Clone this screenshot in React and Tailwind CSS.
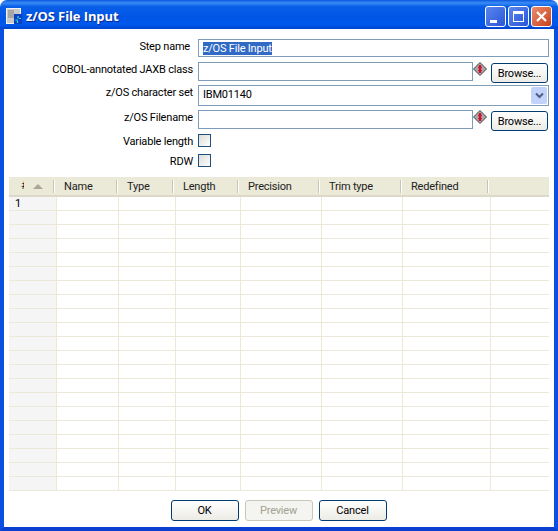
import React from 'react';

const HEADER_COLS = [
    { label: '', width: 'w-[46px]' },
    { label: 'Name', width: 'w-[63px]' },
    { label: 'Type', width: 'w-[56px]' },
    { label: 'Length', width: 'w-[65px]' },
    { label: 'Precision', width: 'w-[81px]' },
    { label: 'Trim type', width: 'w-[82px]' },
    { label: 'Redefined', width: 'w-[87px]' },
];

const ROW_COLS = ['w-[62px]', 'w-[57px]', 'w-[65px]', 'w-[81px]', 'w-[81px]', 'w-[88px]'];
const ROWS = Array.from({ length: 21 }, (_, i) => i);

function AppIcon() {
    return (
        <svg width="17" height="17" viewBox="0 0 17 17" className="shrink-0">
            <rect x="0.5" y="0.5" width="14" height="15" fill="#c9c9c9" stroke="#f2f2f2" />
            <rect x="2" y="2" width="6" height="8" fill="#a6a6a6" />
            <rect x="8" y="6" width="8" height="10" fill="#0b3fc4" />
            <path d="M9.5 12h2M13 10.5h2M12 8v2.5M11.5 12.5v2.5" stroke="#35e0c8" strokeWidth="1.2" />
        </svg>
    );
}

function RequiredIcon() {
    return (
        <svg width="14" height="14" viewBox="0 0 14 14" className="shrink-0">
            <path d="M7 .5 13.5 7 7 13.5.5 7z" fill="#a8a8a8" stroke="#444" strokeWidth="1" />
            <path d="M7 3v8" stroke="#d0102c" strokeWidth="2.4" />
            <path d="M5 5.5h4M5 8.5h4" stroke="#d0102c" strokeWidth="1.2" />
        </svg>
    );
}

function CaptionButton({ className, children }) {
    return (
        <div className={`w-[21px] h-[21px] rounded-[3px] border border-white flex items-center justify-center ${className}`}>
            {children}
        </div>
    );
}

function Field({ label, height, labelClass = '', children }) {
    return (
        <div className={`flex items-start ${height}`}>
            <div className={`w-[189px] shrink-0 text-right text-black leading-[16px] ${labelClass}`}>{label}</div>
            <div className="ml-[5px] flex-1 flex items-start">{children}</div>
        </div>
    );
}

function TextBox({ value, selected, className }) {
    return (
        <div className={`shrink-0 border border-[#7f9db9] bg-white flex items-center pl-[4px] ${className}`}>
            {selected ? <span className="bg-[#316ac5] text-white leading-[13px]">{value}</span> : value}
        </div>
    );
}

function BrowseButton() {
    return (
        <button className="ml-[4px] mt-px shrink-0 w-[57px] h-[20px] rounded-[3px] border border-[#003c74] bg-gradient-to-b from-white to-[#ecebe5] text-black leading-none">
            Browse...
        </button>
    );
}

function CheckBox() {
    return <div className="w-[13px] h-[13px] border border-[#1c5180] bg-gradient-to-br from-[#dcdcd7] to-white" />;
}

function DialogButton({ label, disabled }) {
    const style = disabled
        ? 'border-[#c9c7ba] text-[#a1a192] bg-[#f4f4f0]'
        : 'border-[#003c74] text-black bg-gradient-to-b from-white to-[#ecebe5]';
    return (
        <button className={`w-[68px] h-[21px] rounded-[3px] border leading-none ${style}`}>{label}</button>
    );
}

export default function App() {
    return (
        <div className="w-[558px] h-[531px] flex flex-col overflow-hidden bg-white text-[11px] tracking-[-0.2px] font-['Roboto','Liberation_Sans',sans-serif]">
            <div className="h-[29px] shrink-0 rounded-t-[7px] flex items-center pt-[3px] pl-[6px] pr-[6px] bg-[linear-gradient(180deg,#0a58de_0%,#3a8cf6_10%,#0a5fe8_22%,#0055e5_60%,#0058ee_85%,#0043cf_100%)]">
                <AppIcon />
                <span className="ml-[3px] mt-[2px] text-white text-[13px] font-bold tracking-[-0.1px] font-['Open_Sans',sans-serif] [text-shadow:1px_1px_0_#0f2a8a]">
                    z/OS File Input
                </span>
                <div className="ml-auto flex gap-[2px]">
                    <CaptionButton className="bg-gradient-to-br from-[#5a86ee] to-[#2a55d8]">
                        <div className="w-[7px] h-[3px] bg-white mt-[10px] mr-[5px]" />
                    </CaptionButton>
                    <CaptionButton className="bg-gradient-to-br from-[#5a86ee] to-[#2a55d8]">
                        <div className="w-[11px] h-[11px] border border-t-[3px] border-white" />
                    </CaptionButton>
                    <CaptionButton className="bg-gradient-to-br from-[#ea8a68] to-[#c9401c]">
                        <svg width="13" height="13" viewBox="0 0 13 13">
                            <path d="M2 2l9 9M11 2l-9 9" stroke="#fff" strokeWidth="2.2" />
                        </svg>
                    </CaptionButton>
                </div>
            </div>

            <div className="flex-1 min-h-0 flex flex-col border-x-4 border-b-4 border-x-[#0a50e0] border-b-[#0a3fd0] bg-white">
                <div className="pt-[10px] pr-[5px]">
                    <Field label="Step name" height="h-[23px]" labelClass="pr-[3px]">
                        <TextBox value="z/OS File Input" selected className="w-[351px] h-[18px]" />
                    </Field>
                    <Field label="COBOL-annotated JAXB class" height="h-[23px]">
                        <TextBox className="w-[275px] h-[19px]" />
                        <RequiredIcon />
                        <BrowseButton />
                    </Field>
                    <Field label="z/OS character set" height="h-[25px]">
                        <div className="w-[351px] h-[21px] border border-[#7f9db9] bg-white flex items-center pl-[4px] pr-px">
                            IBM01140
                            <div className="ml-auto w-[16px] h-[17px] rounded-[2px] bg-[#c1d2fb] flex items-center justify-center">
                                <svg width="9" height="7" viewBox="0 0 9 7">
                                    <path d="M1 1.5 4.5 5 8 1.5" fill="none" stroke="#4d6185" strokeWidth="2" />
                                </svg>
                            </div>
                        </div>
                    </Field>
                    <Field label="z/OS Filename" height="h-[24px]">
                        <TextBox className="w-[275px] h-[19px]" />
                        <RequiredIcon />
                        <BrowseButton />
                    </Field>
                    <Field label="Variable length" height="h-[20px]">
                        <CheckBox />
                    </Field>
                    <Field label="RDW" height="h-[23px]">
                        <CheckBox />
                    </Field>
                </div>

                <div className="mx-[5px]">
                    <div className="h-[20px] flex items-center bg-[#ebe9d8] border-b-2 border-[#dcd9c8]">
                        {HEADER_COLS.map((col, i) => (
                            <div key={i} className={`${col.width} h-full flex items-center justify-between`}>
                                {i === 0 ? (
                                    <div className="flex items-center pl-[12px] gap-[9px]">
                                        <span className="w-[3px] overflow-hidden text-[#222]">#</span>
                                        <svg width="10" height="5" viewBox="0 0 10 5">
                                            <path d="M5 0l5 5H0z" fill="#aca899" />
                                        </svg>
                                    </div>
                                ) : (
                                    <span className="pl-[9px] pt-[2px] text-[#222]">{col.label}</span>
                                )}
                                <div className="w-[2px] h-[13px] border-x border-l-[#c7c5b2] border-r-white" />
                            </div>
                        ))}
                    </div>
                    {ROWS.map((row) => (
                        <div key={row} className="flex h-[14px] border-b border-[#ece9d8]">
                            <div className="w-[48px] bg-[#f5f5f5] border-r border-[#ece9d8] pl-[6px] leading-[14px] text-black">
                                {row === 0 ? '1' : ''}
                            </div>
                            {ROW_COLS.map((width, i) => (
                                <div key={i} className={`${width} border-r border-[#ece9d8]`} />
                            ))}
                        </div>
                    ))}
                </div>

                <div className="flex-1 flex justify-center gap-[6px] pt-[9px] mr-[1px]">
                    <DialogButton label="OK" />
                    <DialogButton label="Preview" disabled />
                    <DialogButton label="Cancel" />
                </div>
            </div>
        </div>
    );
}
